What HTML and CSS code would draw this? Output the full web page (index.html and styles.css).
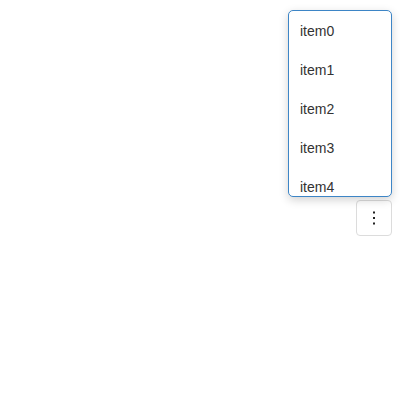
FILE: index.html
```html
<!DOCTYPE html>
<html>
<head>
<meta charset="utf-8">
<link rel="stylesheet" href="styles.css">
</head>
<body>
<div class="bar">
  <div class="anchor">
    <ul class="menu">
      <li class="item">item0</li>
      <li class="item">item1</li>
      <li class="item">item2</li>
      <li class="item">item3</li>
      <li class="item">item4</li>
    </ul>
    <button class="more" aria-label="more">
      <svg width="4" height="16" viewBox="0 0 4 16"><rect x="1" y="1.5" width="2" height="2" fill="#222"/><rect x="1" y="7" width="2" height="2" fill="#222"/><rect x="1" y="12.5" width="2" height="2" fill="#222"/></svg>
    </button>
  </div>
</div>
</body>
</html>
```
FILE: styles.css
```css
html, body {
  margin: 0;
  background: #fff;
  font-family: "Liberation Sans", Arial, sans-serif;
}
body {
  padding: 8px;
}
.bar {
  display: flex;
  justify-content: flex-end;
  padding-top: 192px;
}
.anchor {
  position: relative;
}
.more {
  box-sizing: border-box;
  width: 36px;
  height: 36px;
  padding: 0;
  margin: 0;
  border: 1px solid #dcdcdc;
  border-radius: 4px;
  background: #fff;
  display: flex;
  align-items: center;
  justify-content: center;
}
.menu {
  position: absolute;
  right: 0;
  bottom: calc(100% + 3px);
  box-sizing: border-box;
  width: 104px;
  height: 187px;
  margin: 0;
  padding: 1px 0 0;
  list-style: none;
  border: 1px solid #3d85c6;
  border-radius: 5px;
  background: #fff;
  overflow: hidden;
  box-shadow: 0 3px 10px rgba(0, 0, 0, 0.18);
}
.item {
  height: 39px;
  line-height: 39px;
  padding-left: 11px;
  font-size: 14px;
  color: #333;
}
```
